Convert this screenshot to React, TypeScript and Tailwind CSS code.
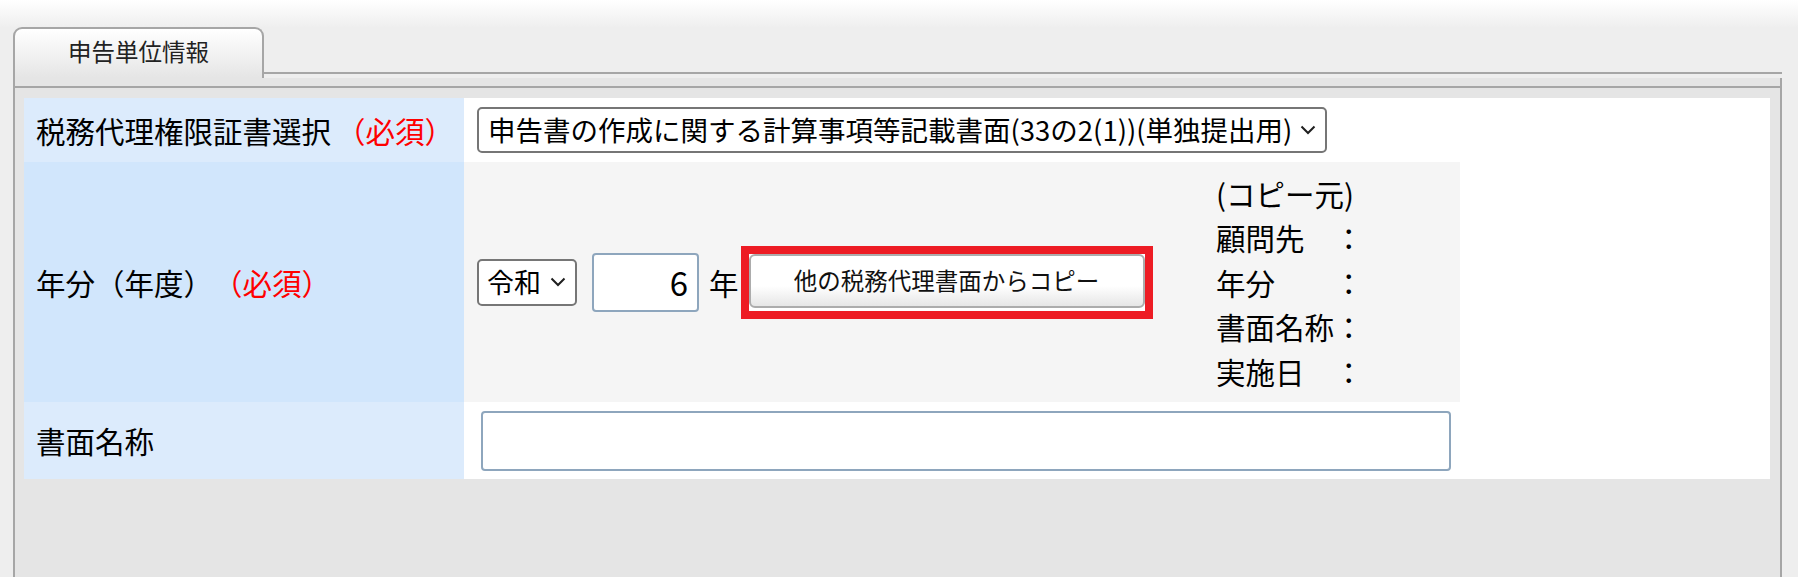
import React from "react";

const jp = "font-['Noto_Sans_CJK_JP',sans-serif]";

const Chevron = () => (
  <svg width="16" height="10" viewBox="0 0 16 10" className="shrink-0">
    <path d="M1.5 1.5l6.5 6.5 6.5-6.5" fill="none" stroke="#1f1f1f" strokeWidth="2" />
  </svg>
);

const Required = ({ className = "" }: { className?: string }) => (
  <span className={`text-[#ff0000] ${className}`}>（必須）</span>
);

const copyInfo = ["顧問先　：", "年分　　：", "書面名称：", "実施日　："];

const App = () => {
  return (
    <main
      className={`${jp} min-h-[577px] flex flex-col bg-[#eeeeee] bg-[linear-gradient(to_bottom,#ffffff,#eeeeee_28px)] pt-[27px] text-black`}
    >
      {/* tab bar */}
      <div className="flex items-start ml-[13px] mr-[16px]">
        <div className="w-[251px] h-[51px] border-2 border-b-0 border-[#a6a6a6] rounded-t-[9px] bg-[linear-gradient(to_bottom,#ffffff,#e5e5e5)] flex items-center justify-center pb-[4px] text-[23.5px] text-[#222]">
          申告単位情報
        </div>
        <div className="flex-1 h-[47px] border-b-2 border-[#a6a6a6]" />
      </div>

      {/* panel */}
      <div className="flex-1 ml-[13px] mr-[16px] border-x-2 border-[#a6a6a6] bg-[#e5e5e5]">
        <div className="h-[8px]" />
        <div className="h-[2px] bg-[#a6a6a6]" />
        <div className="pt-[10px] pl-[9px] pr-[10px]">
          <div className="flex flex-col bg-white">
            {/* row 1 */}
            <div className="flex h-[64px]">
              <div className="w-[440px] shrink-0 bg-[#dcebfc] flex items-center pl-[12px] text-[29.5px] whitespace-nowrap">
                税務代理権限証書選択
                <Required className="ml-[5px]" />
              </div>
              <div className="flex-1 flex items-center pl-[13px]">
                <div className="w-[850px] h-[46px] border-2 border-[#767676] rounded-[5px] bg-white flex items-center justify-between pl-[9px] pr-[9px]">
                  <span className="text-[27.5px] whitespace-nowrap overflow-hidden">
                    申告書の作成に関する計算事項等記載書面(33の2(1))(単独提出用)
                  </span>
                  <Chevron />
                </div>
              </div>
            </div>

            {/* row 2 */}
            <div className="flex h-[240px]">
              <div className="w-[440px] shrink-0 bg-[#d1e6fc] flex items-center pl-[12px] text-[29.5px] whitespace-nowrap">
                年分（年度）
                <Required />
              </div>
              <div className="w-[996px] bg-[#f5f5f5] flex items-center pl-[13px]">
                <div className="w-[739px] flex items-center">
                  <div className="w-[100px] h-[47px] border-2 border-[#767676] rounded-[5px] bg-white flex items-center justify-between pl-[8px] pr-[9px]">
                    <span className="text-[27px]">令和</span>
                    <Chevron />
                  </div>
                  <input
                    readOnly
                    value="6"
                    className="ml-[15px] w-[107px] h-[59px] border-2 border-[#8ea6bd] rounded-[4px] bg-white text-right pr-[9px] text-[33px] outline-none"
                  />
                  <span className="ml-[10px] text-[29.5px]">年</span>
                  <div className="ml-[2px] border-8 border-[#ed1c24] bg-white pb-[3px]">
                    <button className="block w-[396px] h-[54px] border-2 border-[#acacac] rounded-[6px] bg-[linear-gradient(to_bottom,#ffffff_60%,#e6e6e6)] text-[23.5px] text-[#111]">
                      他の税務代理書面からコピー
                    </button>
                  </div>
                </div>
                <div className="leading-[44.6px] text-[29.5px] whitespace-pre">
                  <div>(コピー元)</div>
                  {copyInfo.map((line) => (
                    <div key={line}>{line}</div>
                  ))}
                </div>
              </div>
              <div className="flex-1 bg-white" />
            </div>

            {/* row 3 */}
            <div className="flex h-[77px]">
              <div className="w-[440px] shrink-0 bg-[#dcebfc] flex items-center pl-[12px] text-[29.5px]">
                書面名称
              </div>
              <div className="flex-1 flex items-center pl-[17px]">
                <input
                  readOnly
                  className="w-[970px] h-[60px] border-2 border-[#8ea6bd] rounded-[4px] bg-white outline-none"
                />
              </div>
            </div>
          </div>
        </div>
      </div>
    </main>
  );
};

export default App;
